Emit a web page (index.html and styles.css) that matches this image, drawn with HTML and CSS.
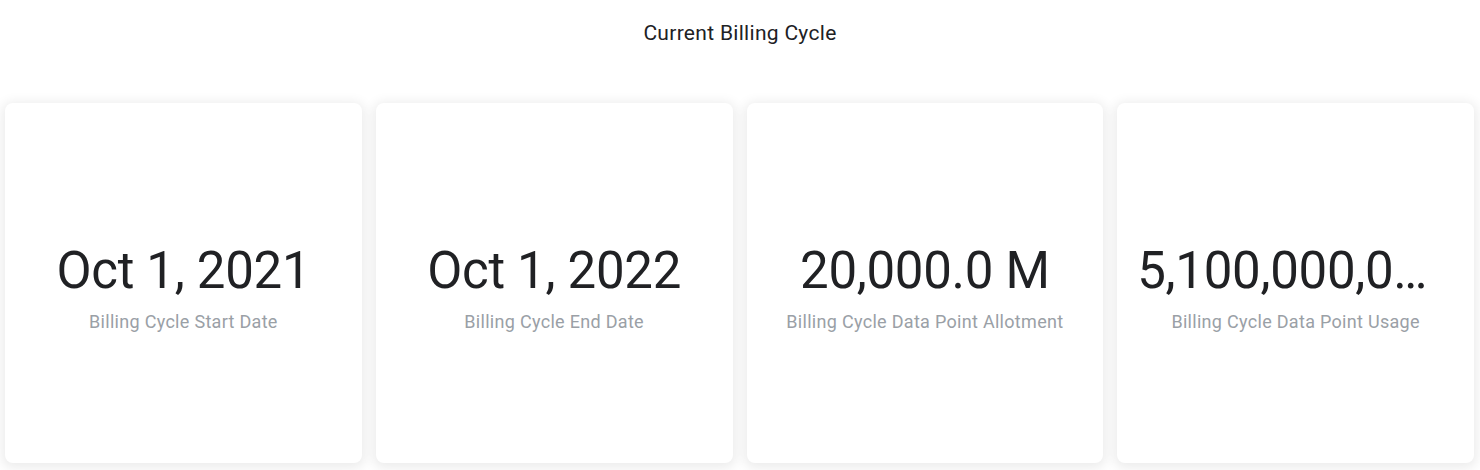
FILE: index.html
```html
<!DOCTYPE html>
<html lang="en">
<head>
<meta charset="utf-8">
<title>Current Billing Cycle</title>
<link rel="stylesheet" href="styles.css">
</head>
<body>
<div class="page">
  <h1 class="title">Current Billing Cycle</h1>
  <div class="cards">
    <div class="card">
      <div class="value">Oct 1, 2021</div>
      <div class="label">Billing Cycle Start Date</div>
    </div>
    <div class="card">
      <div class="value">Oct 1, 2022</div>
      <div class="label">Billing Cycle End Date</div>
    </div>
    <div class="card">
      <div class="value">20,000.0 M</div>
      <div class="label">Billing Cycle Data Point Allotment</div>
    </div>
    <div class="card">
      <div class="value">5,100,000,000.0</div>
      <div class="label">Billing Cycle Data Point Usage</div>
    </div>
  </div>
</div>
</body>
</html>
```

FILE: styles.css
```css
html, body {
  margin: 0;
  padding: 0;
  background: #ffffff;
}
body {
  font-family: Roboto, "Liberation Sans", sans-serif;
  color: #202124;
  width: 1480px;
  height: 470px;
  overflow: hidden;
}
.page {
  display: flex;
  flex-direction: column;
}
.title {
  margin: 0;
  padding-top: 20px;
  height: 103px;
  box-sizing: border-box;
  font-size: 21px;
  font-weight: 400;
  line-height: 26px;
  letter-spacing: 0.3px;
  text-align: center;
  color: #202124;
}
.cards {
  display: flex;
  gap: 14px;
  padding: 0 6px 0 5px;
}
.card {
  flex: 1;
  min-width: 0;
  height: 360px;
  background: #fff;
  border-radius: 8px;
  box-shadow: 0 2px 12px 3px rgba(0, 0, 0, 0.08);
  display: flex;
  flex-direction: column;
  align-items: center;
  justify-content: center;
  padding: 8px 20px 0;
  box-sizing: border-box;
}
.value {
  max-width: 100%;
  font-size: 51px;
  line-height: 60px;
  letter-spacing: -0.3px;
  white-space: nowrap;
  overflow: hidden;
  text-overflow: ellipsis;
  color: #202124;
}
.label {
  margin-top: 9px;
  font-size: 18px;
  line-height: 24px;
  letter-spacing: 0.3px;
  color: #9aa0a6;
  white-space: nowrap;
}
```
